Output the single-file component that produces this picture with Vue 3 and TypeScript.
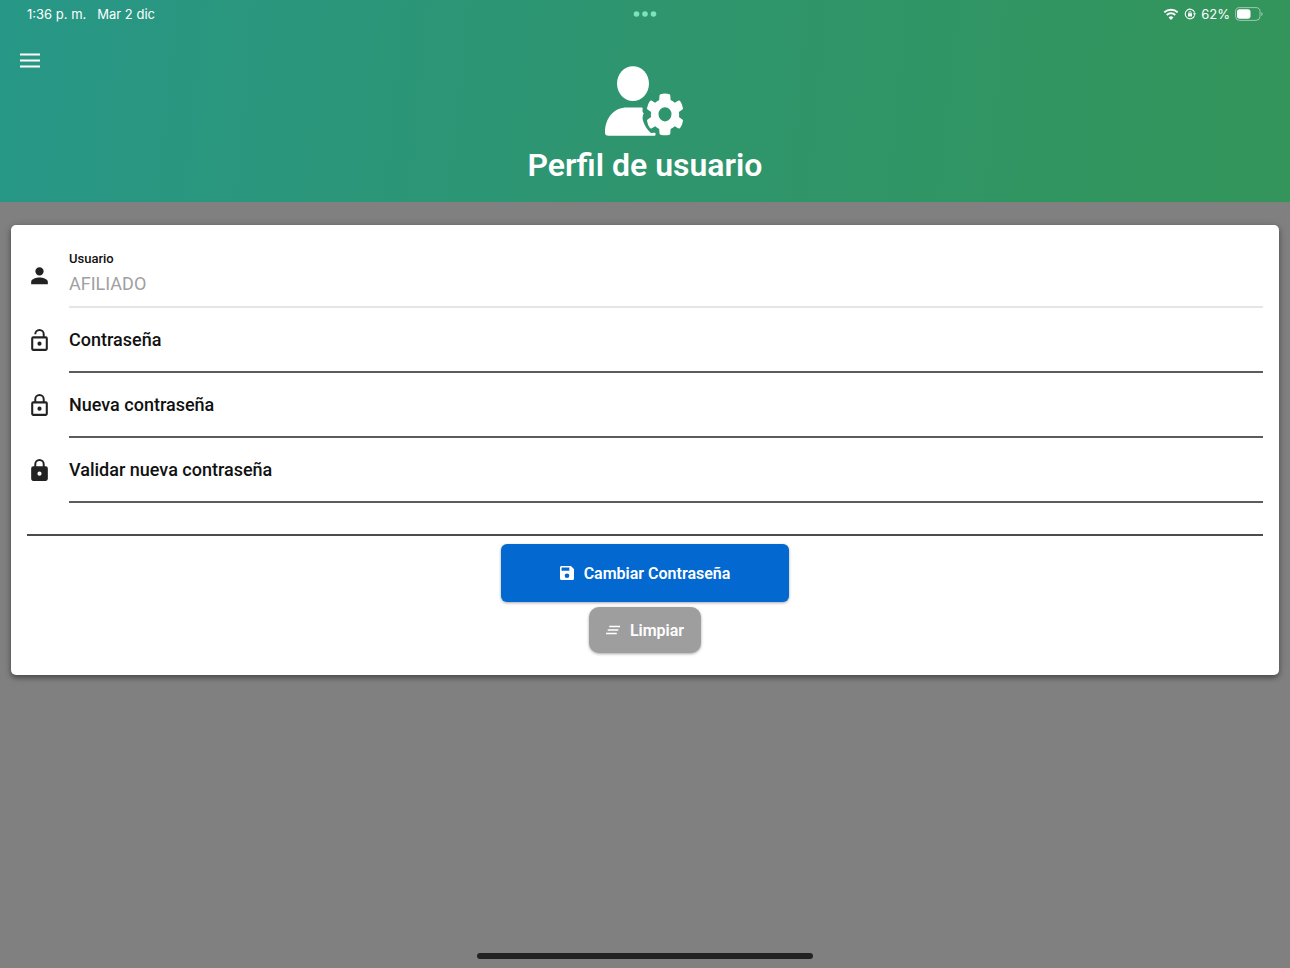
<script setup lang="ts">
import { ref } from 'vue'

interface PasswordField {
  id: string
  label: string
  icon: string
}

const user = ref('AFILIADO')
const values = ref<Record<string, string>>({ current: '', next: '', confirm: '' })

const fields: PasswordField[] = [
  {
    id: 'current',
    label: 'Contraseña',
    icon: 'M12 13a2 2 0 1 1 0 4 2 2 0 0 1 0-4zM18 8h-1V6A5 5 0 0 0 7 6h1.900a3.100 3.100 0 0 1 6.200 0v2H6a2 2 0 0 0-2 2v10c0 1.100.9 2 2 2h12a2 2 0 0 0 2-2V10a2 2 0 0 0-2-2zm0 12H6V10h12v10z',
  },
  {
    id: 'next',
    label: 'Nueva contraseña',
    icon: 'M12 13a2 2 0 1 1 0 4 2 2 0 0 1 0-4zM18 8h-1V6A5 5 0 0 0 7 6v2H6a2 2 0 0 0-2 2v10c0 1.100.9 2 2 2h12a2 2 0 0 0 2-2V10a2 2 0 0 0-2-2zM8.900 6a3.100 3.100 0 0 1 6.200 0v2H8.900V6zM18 20H6V10h12v10z',
  },
  {
    id: 'confirm',
    label: 'Validar nueva contraseña',
    icon: 'M18 8h-1V6A5 5 0 0 0 7 6v2H6a2 2 0 0 0-2 2v10c0 1.100.9 2 2 2h12a2 2 0 0 0 2-2V10a2 2 0 0 0-2-2zm-6 9a2 2 0 1 1 0-4 2 2 0 0 1 0 4zM15.100 8H8.900V6a3.100 3.100 0 0 1 6.200 0v2z',
  },
]

function clear(): void {
  values.value = { current: '', next: '', confirm: '' }
}
</script>

<template>
  <div class="screen">
    <header class="header">
      <div class="status">
        <div class="status-left">
          <span>1:36 p. m.</span>
          <span>Mar 2 dic</span>
        </div>
        <svg class="dots" viewBox="0 0 24 6" aria-hidden="true">
          <circle cx="3.500" cy="3" r="2.800" /><circle cx="12" cy="3" r="2.800" /><circle cx="20.500" cy="3" r="2.800" />
        </svg>
        <div class="status-right">
          <svg class="wifi" viewBox="0 0 16 12" aria-hidden="true">
            <path d="M1.300 4.400a9.600 9.600 0 0 1 13.400 0M3.800 7a6 6 0 0 1 8.400 0" fill="none" stroke="#fff" stroke-width="2" />
            <path d="M8 12 5.600 9.400a3.400 3.400 0 0 1 4.800 0z" fill="#fff" />
          </svg>
          <svg class="rotation" viewBox="0 0 12 12" aria-hidden="true">
            <path d="M10.600 7.400A4.800 4.800 0 1 1 10.600 4.600" fill="none" stroke="#fff" stroke-width="1.100" />
            <path d="M9 5.200h3L10.700 7.500z" fill="#fff" />
            <rect x="4" y="5.300" width="4" height="3.200" rx=".5" fill="#fff" />
            <path d="M4.900 5.500V4.600a1.100 1.100 0 0 1 2.200 0v.9" fill="none" stroke="#fff" stroke-width=".8" />
          </svg>
          <span>62%</span>
          <svg class="battery" viewBox="0 0 28 14" aria-hidden="true">
            <rect x=".6" y=".6" width="24.400" height="12.800" rx="4" fill="none" stroke="#fff" stroke-opacity=".5" />
            <rect x="2" y="2.300" width="13.500" height="9.400" rx="2.600" fill="#fff" />
            <path d="M26.300 5c1.700.5 1.700 3.500 0 4z" fill="#fff" fill-opacity=".5" />
          </svg>
        </div>
      </div>
      <button class="menu" type="button" aria-label="Menú">
        <svg viewBox="0 0 20 16" aria-hidden="true">
          <path d="M0 1.500h20M0 7.500h20M0 13.500h20" stroke="#fff" stroke-width="2.200" />
        </svg>
      </button>
      <div class="hero">
        <svg class="hero-icon" viewBox="0 0 80 70" aria-hidden="true">
          <ellipse cx="28" cy="17.600" rx="16" ry="17.400" />
          <path d="M22 41.600h14.800c1 0 1 1.200.8 2-.5 1.800.2 2.900 1.200 4-1.300 2-1.500 4.600-.8 7.200 1.500 5 4.400 9.200 7.400 11.600 1.500 1 3.200.2 4.300.3.900.2 1 1 .9 1.800-.1 1-.6 1.300-1.300 1.300H3.500C1 69.800 0 68.600 0 66.500 0 52 9 41.600 22 41.600z" />
          <path fill-rule="evenodd" d="M55.500 28.200Q60 26.600 64.500 28.200Q65.200 28.500 65.300 29.500L65.600 34Q68 35 69.700 36.700L73.600 34.600Q74.500 34.200 75.100 34.900Q77.400 38 78 42.200Q78.100 43 77.400 43.600L73.900 46Q74.400 48.500 73.900 51L77.400 53.400Q78.100 54 78 54.800Q77.400 59 75.100 62.100Q74.500 62.800 73.600 62.400L69.700 60.300Q68 62 65.600 63L65.300 67.500Q65.200 68.500 64.500 68.700Q60 69.900 55.500 68.700Q54.600 68.400 54.500 67.500L54.200 63Q52 62 50.200 60.300L46.400 62.400Q45.500 62.800 44.900 62.100Q42.600 59 42 54.800Q41.900 54 42.600 53.400L46.100 51Q45.600 48.500 46.100 46L42.600 43.600Q41.900 43 42 42.200Q42.600 38 44.900 34.900Q45.500 34.200 46.400 34.600L50.200 36.700Q52 35 54.200 34L54.500 29.500Q54.600 28.500 55.500 28.200zM60 41.200a6.400 7 0 1 0 0 14.200 6.400 7 0 0 0 0-14.200z" />
        </svg>
        <h1>Perfil de usuario</h1>
      </div>
    </header>

    <main class="content">
      <form class="card" @submit.prevent>
        <div class="row row-user">
          <svg class="row-icon" viewBox="0 0 24 24" aria-hidden="true">
            <path d="M12 12a4 4 0 1 0 0-8 4 4 0 0 0 0 8zm0 2c-2.670 0-8 1.340-8 4v2.500h16V18c0-2.660-5.330-4-8-4z" />
          </svg>
          <div class="user-field">
            <label for="user">Usuario</label>
            <input id="user" v-model="user" type="text" disabled />
          </div>
        </div>
        <div v-for="field in fields" :key="field.id" class="row">
          <svg class="row-icon" viewBox="0 0 24 24" aria-hidden="true">
            <path fill-rule="evenodd" :d="field.icon" />
          </svg>
          <div class="field">
            <input :id="field.id" v-model="values[field.id]" type="password" />
            <label v-show="!values[field.id]" :for="field.id">{{ field.label }}</label>
          </div>
        </div>
        <hr class="divider" />
        <div class="actions">
          <button class="btn save" type="submit">
            <svg viewBox="0 0 18 18" aria-hidden="true">
              <path fill-rule="evenodd" d="M2 0h12l4 4v12a2 2 0 0 1-2 2H2a2 2 0 0 1-2-2V2C0 .9.9 0 2 0zm0 2v4h10V2zm7 7.500a3 3 0 1 0 0 6 3 3 0 0 0 0-6z" />
            </svg>
            <span>Cambiar Contraseña</span>
          </button>
          <button class="btn clear" type="button" @click="clear">
            <svg viewBox="0 0 14 14" aria-hidden="true">
              <path d="M3.200 3.500H14M1.700 7h10.600M0 10.500h10.800" stroke="#fff" stroke-width="1.500" />
            </svg>
            <span>Limpiar</span>
          </button>
        </div>
      </form>
    </main>
    <div class="home-indicator"></div>
  </div>
</template>

<style>
body {
  margin: 0;
  background: #808080;
}
</style>

<style scoped>
.screen {
  min-height: 100vh;
  display: flex;
  flex-direction: column;
  box-sizing: border-box;
  background: #808080;
  font-family: Roboto, "Liberation Sans", sans-serif;
  color: #111;
}
.header {
  padding-bottom: 17px;
  background: linear-gradient(96deg, #279787 0%, #2e956e 50%, #33955a 100%);
  color: #fff;
}
.status {
  display: grid;
  grid-template-columns: 1fr auto 1fr;
  align-items: center;
  height: 28px;
  padding: 0 27px;
  font-family: Inter, Roboto, sans-serif;
  font-size: 13px;
}
.status-left {
  display: flex;
  gap: 11px;
}
.status-right {
  display: flex;
  align-items: center;
  justify-content: flex-end;
  gap: 5px;
}
.dots {
  width: 24px;
  height: 6px;
  fill: #7be2bd;
}
.wifi {
  width: 16px;
  height: 12px;
}
.rotation {
  width: 12px;
  height: 12px;
}
.battery {
  width: 28px;
  height: 14px;
}
.menu {
  display: block;
  margin: 17px 0 0 12px;
  padding: 8px;
  border: 0;
  background: none;
}
.menu svg {
  display: block;
  width: 20px;
  height: 16px;
}
.hero {
  display: flex;
  flex-direction: column;
  align-items: center;
  margin-top: -11px;
}
.hero-icon {
  width: 80px;
  height: 70px;
  fill: #fff;
}
h1 {
  margin: 9px 0 0;
  font-size: 32px;
  line-height: 40px;
  font-weight: 600;
}
.content {
  flex: 1;
  padding: 23px 11px 0;
}
.card {
  padding: 17px 16px 22px;
  border-radius: 5px;
  background: #fff;
  box-shadow: 0 3px 5px rgba(0, 0, 0, 0.32), 0 1px 8px rgba(0, 0, 0, 0.2);
}
.row {
  display: flex;
  align-items: center;
  gap: 17px;
  height: 65px;
}
.row-icon {
  flex: none;
  width: 25px;
  height: 27px;
  fill: #222;
}
.field {
  flex: 1;
  display: grid;
  height: 100%;
  box-sizing: border-box;
  border-bottom: 2px solid #5c5c5c;
}
.field input,
.field label {
  grid-area: 1 / 1;
}
.field label {
  align-self: center;
  font-size: 18px;
  line-height: 24px;
  font-weight: 500;
}
input {
  box-sizing: border-box;
  width: 100%;
  padding: 0;
  border: 0;
  outline: 0;
  background: transparent;
  font-family: inherit;
  font-size: 18px;
}
.row-user {
  height: 66px;
}
.user-field {
  flex: 1;
  height: 100%;
  display: flex;
  flex-direction: column;
  box-sizing: border-box;
  padding-top: 9px;
  border-bottom: 2px solid #e6e6e6;
}
.user-field label {
  font-size: 13px;
  line-height: 16px;
  font-weight: 500;
}
.user-field input {
  height: 32px;
  color: #a0a0a0;
}
.divider {
  height: 2px;
  margin: 31px 0 8px;
  border: 0;
  background: #4c4c4c;
}
.actions {
  display: flex;
  flex-direction: column;
  align-items: center;
  gap: 5px;
}
.btn {
  display: flex;
  align-items: center;
  justify-content: center;
  gap: 10px;
  padding: 0 17px;
  border: 0;
  color: #fff;
  font-family: inherit;
  font-size: 16px;
  font-weight: 600;
  box-shadow: 0 1px 3px rgba(0, 0, 0, 0.35);
}
.btn svg {
  width: 14px;
  height: 14px;
  fill: #fff;
}
.save {
  width: 288px;
  height: 58px;
  border-radius: 6px;
  background: #0368d0;
}
.clear {
  height: 46px;
  border-radius: 10px;
  background: #9e9e9e;
}
.home-indicator {
  align-self: center;
  width: 26%;
  height: 6px;
  margin-bottom: 9px;
  border-radius: 3px;
  background: #222;
}
</style>
